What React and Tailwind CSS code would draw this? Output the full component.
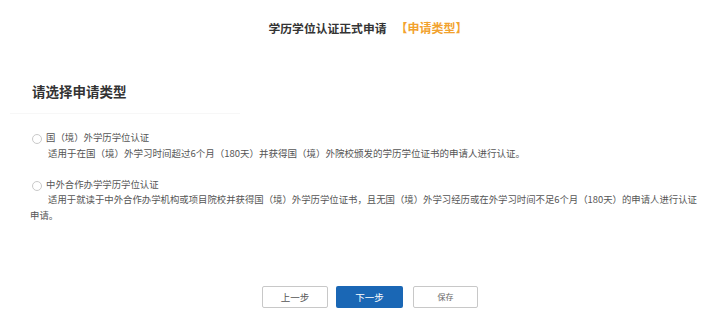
import React, { useState } from 'react';

const options = [
  {
    id: 'foreign',
    label: '国（境）外学历学位认证',
    desc: '适用于在国（境）外学习时间超过6个月（180天）并获得国（境）外院校颁发的学历学位证书的申请人进行认证。',
  },
  {
    id: 'joint',
    label: '中外合作办学学历学位认证',
    desc: '适用于就读于中外合作办学机构或项目院校并获得国（境）外学历学位证书，且无国（境）外学习经历或在外学习时间不足6个月（180天）的申请人进行认证申请。',
  },
];

const App = () => {
  const [selected, setSelected] = useState(null);

  return (
    <div
      className="w-[720px] h-[316px] bg-white overflow-hidden text-[#444]"
      style={{ fontFamily: '"Noto Sans CJK SC", "Noto Sans", sans-serif' }}
    >
      {/* header */}
      <div className="flex justify-center items-center pt-[20px] pl-[16px] h-[36px]">
        <span className="text-[11.8px] leading-[16px] font-bold text-[#333]">学历学位认证正式申请</span>
        <span className="ml-[9px] text-[12px] leading-[16px] font-bold text-[#f2a22e]">【申请类型】</span>
      </div>

      <h2 className="mt-[46px] pl-[32px] text-[13.5px] leading-[18px] font-bold text-[#333]">请选择申请类型</h2>
      <div className="mt-[13px] ml-[10px] w-[230px] h-px bg-[#f7f7f7]" />

      {/* options */}
      <div className="mt-[16px]">
        {options.map((opt, i) => (
          <div key={opt.id} className={i === 0 ? '' : 'mt-[17px]'}>
            <label className="flex items-center pl-[32px] cursor-pointer" onClick={() => setSelected(opt.id)}>
              <span className="mt-[3px] w-[10px] h-[10px] rounded-full border border-[#c9c9c9] bg-white flex items-center justify-center">
                {selected === opt.id && <span className="w-[4px] h-[4px] rounded-full bg-[#1a67b5]" />}
              </span>
              <span className="ml-[4px] text-[9.4px] leading-[14px] text-[#555]">{opt.label}</span>
            </label>
            {i === 0 ? (
              <p className="mt-[2px] pl-[48px] text-[9.5px] leading-[14px] text-[#555]">{opt.desc}</p>
            ) : (
              <p className="pl-[30px] pr-[16px] indent-[18px] text-[9.4px] leading-[16px] text-[#555]">{opt.desc}</p>
            )}
          </div>
        ))}
      </div>

      {/* actions */}
      <div className="mt-[63px] flex justify-center pl-[20px]">
        <button className="w-[66px] h-[22px] rounded-[2px] border border-[#c8c8c8] bg-white text-[9.5px] text-[#555]">
          上一步
        </button>
        <button className="ml-[8px] w-[67px] h-[22px] rounded-[2px] bg-[#1a67b5] text-[9.5px] text-white">
          下一步
        </button>
        <button className="ml-[10px] w-[65px] h-[22px] rounded-[2px] border border-[#c8c8c8] bg-white text-[8px] text-[#666]">
          保存
        </button>
      </div>
    </div>
  );
};

export default App;
